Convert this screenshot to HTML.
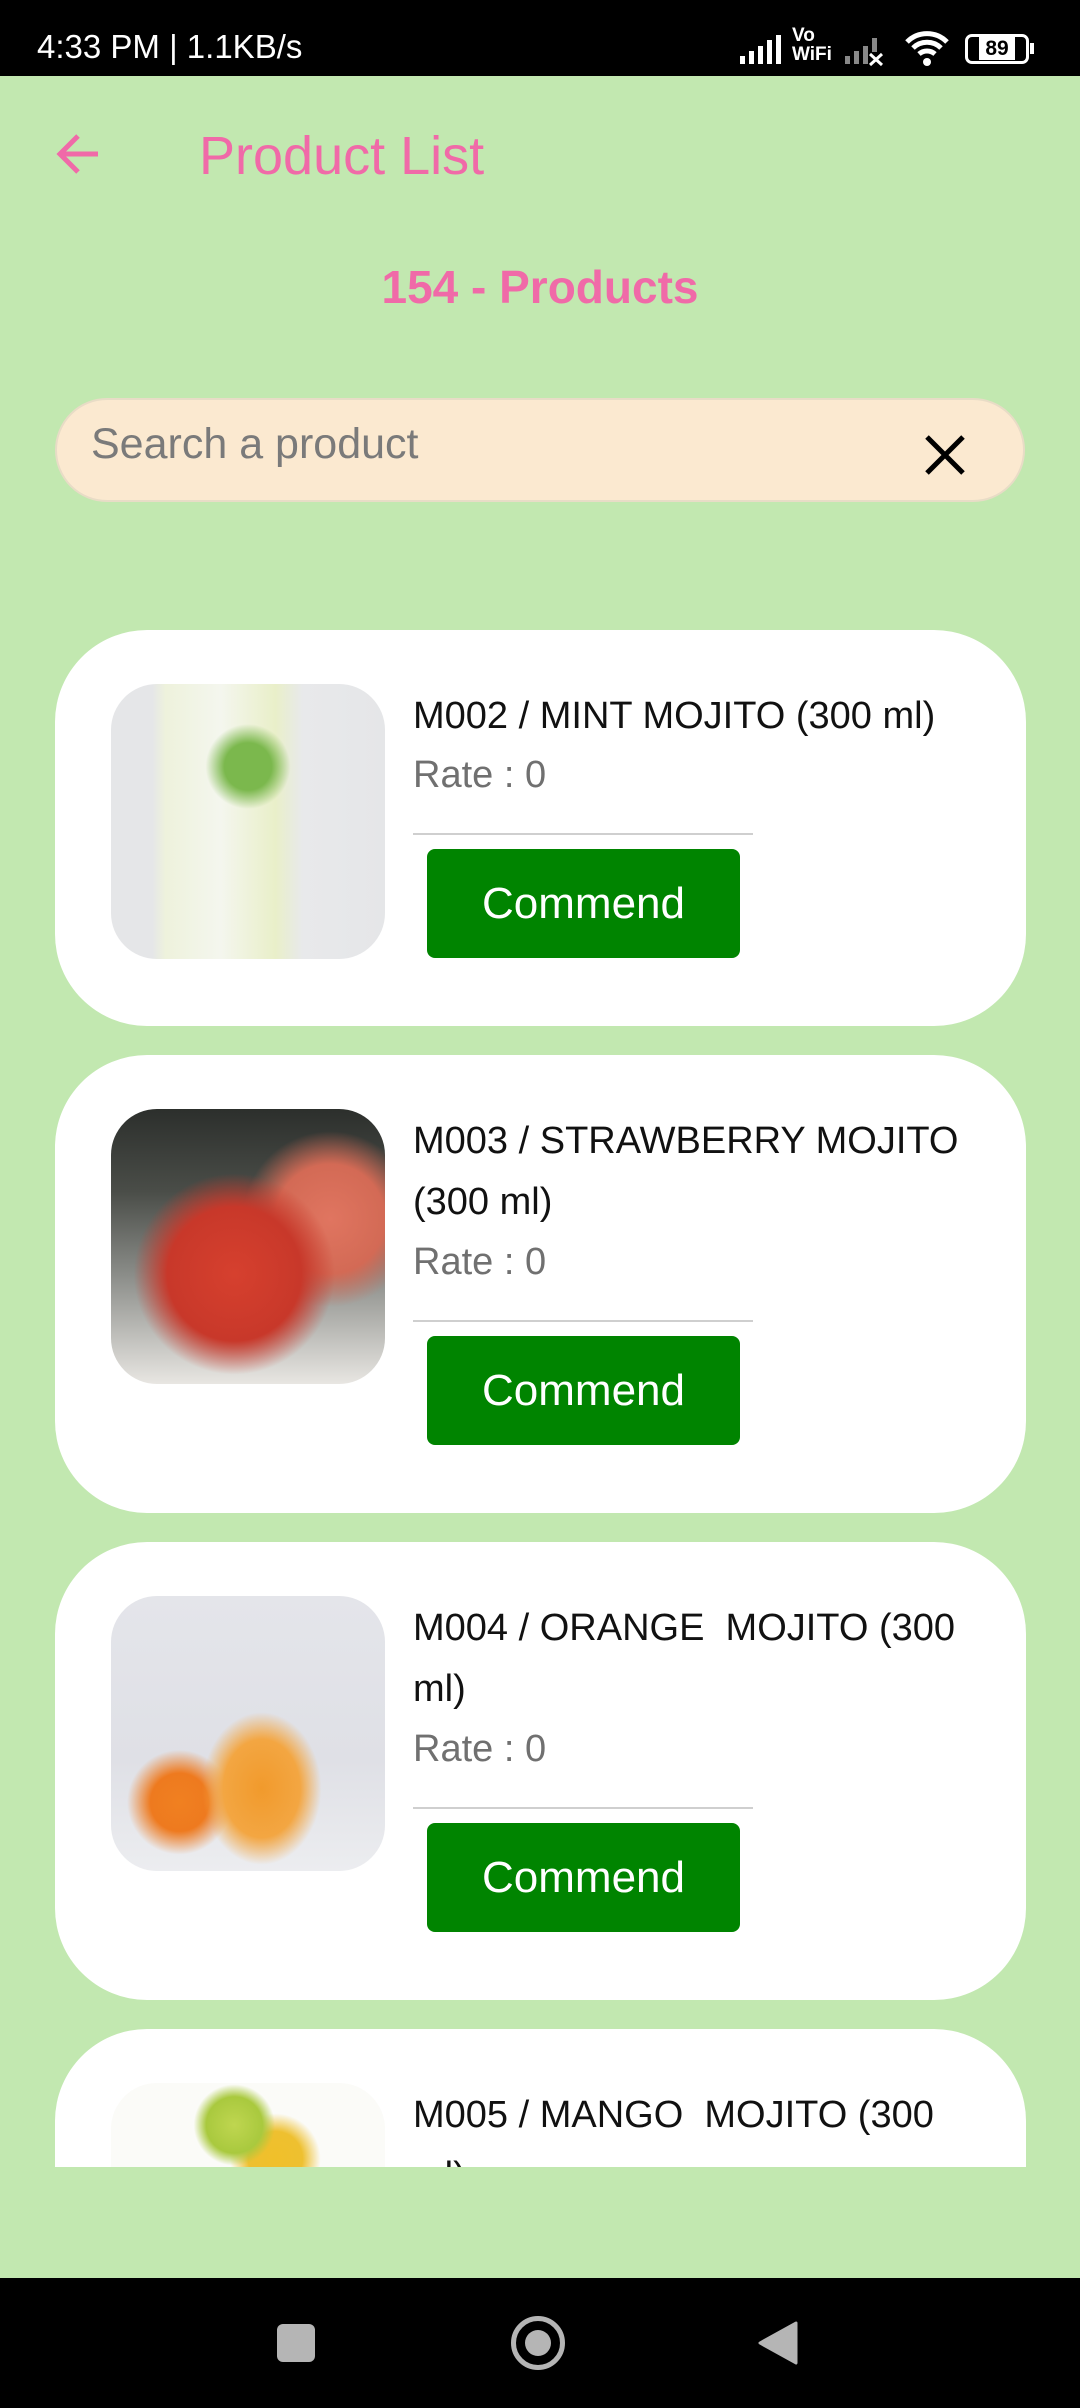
<!DOCTYPE html>
<html><head><meta charset="utf-8"><style>
*{margin:0;padding:0;box-sizing:border-box}
body{width:1080px;height:2408px;background:#c2e8b0;font-family:"Liberation Sans",sans-serif;position:relative;overflow:hidden}
.sb{position:absolute;left:0;top:0;width:1080px;height:76px;background:#000;color:#fff}
.nav{position:absolute;left:0;top:2278px;width:1080px;height:130px;background:#000}
.abs{position:absolute}
.card{position:absolute;left:55px;width:971px;height:458px;background:#fff;border-radius:92px;overflow:hidden}
.img{position:absolute;left:56px;top:54px;width:274px;height:275px;border-radius:46px;overflow:hidden}
.t{position:absolute;left:358px;font-size:38px;color:#111;line-height:61px;width:555px}
.r{position:absolute;left:358px;font-size:38px;color:#707070}
.ln{position:absolute;left:358px;width:340px;height:2px;background:#cfcfcf}
.btn{position:absolute;left:372px;width:313px;height:109px;background:#008400;border-radius:8px;color:#fff;font-size:44px;text-align:center;line-height:109px}
</style></head><body>
<div class="sb">
<div class="abs" style="left:37px;top:28px;font-size:33px">4:33 PM | 1.1KB/s</div>
<div class="abs" style="left:738px;top:34px">
<svg width="46" height="32"><rect x="2" y="22" width="5" height="8" fill="#fff"/><rect x="11" y="17" width="5" height="13" fill="#fff"/><rect x="20" y="12" width="5" height="18" fill="#fff"/><rect x="29" y="6" width="5" height="24" fill="#fff"/><rect x="38" y="1" width="5" height="29" fill="#fff"/></svg></div>
<div class="abs" style="left:792px;top:26px;font-size:19px;line-height:19px;font-weight:bold">Vo<br>WiFi</div>
<div class="abs" style="left:843px;top:34px"><svg width="46" height="32"><rect x="2" y="22" width="5" height="8" fill="#888"/><rect x="11" y="17" width="5" height="13" fill="#888"/><rect x="20" y="12" width="5" height="18" fill="#888"/><rect x="29" y="4" width="5" height="14" fill="#888"/><path d="M27 20l12 11M39 20l-12 11" stroke="#fff" stroke-width="3"/></svg></div>
<div class="abs" style="left:904px;top:28px"><svg width="46" height="40" viewBox="0 0 46 40"><path d="M3 14a28 28 0 0 1 40 0M9 20a20 20 0 0 1 28 0M15 26a12 12 0 0 1 16 0" stroke="#fff" stroke-width="5" fill="none"/><circle cx="23" cy="34" r="4" fill="#fff"/></svg></div>
<div class="abs" style="left:965px;top:34px;width:64px;height:30px;border:3px solid #fff;border-radius:7px;font-size:21px;text-align:center;line-height:24px;font-weight:bold"><span style="background:#fff;color:#000;padding:0 6px">89</span></div>
<div class="abs" style="left:1030px;top:43px;width:4px;height:11px;background:#fff"></div>
</div>
<svg class="abs" style="left:54px;top:132px" width="48" height="44" viewBox="0 0 48 44"><path d="M44 22H6M24 4L6 22l18 18" stroke="#f06aa8" stroke-width="5" fill="none"/></svg>
<div class="abs" style="left:199px;top:125px;font-size:54px;color:#f06aa8">Product List</div>
<div class="abs" style="left:0;width:1080px;text-align:center;top:260px;font-size:46px;font-weight:bold;color:#f06aa8">154 - Products</div>
<div class="abs" style="left:55px;top:398px;width:970px;height:104px;background:#fbe9d0;border-radius:52px;border:2px solid #e8dcc6"></div>
<div class="abs" style="left:91px;top:420px;font-size:43px;color:#7a7a7a">Search a product</div>
<svg class="abs" style="left:924px;top:434px" width="42" height="42"><path d="M3 3l36 36M39 3L3 39" stroke="#000" stroke-width="5"/></svg>

<div class="card" style="top:630px;height:396px">
<div class="img" style="background:radial-gradient(circle at 50% 30%,#7bb84d 0,#7bb84d 10%,transparent 18%),linear-gradient(90deg,#e5e6e8 0,#e5e6e8 15%,#eef2dc 20%,#f4f6ee 40%,#e9efc9 60%,#e8e9eb 70%,#e5e6e8 100%)"></div>
<div class="t" style="top:56px">M002 / MINT MOJITO (300 ml)</div>
<div class="r" style="top:124px">Rate : 0</div>
<div class="ln" style="top:203px"></div>
<div class="btn" style="top:219px">Commend</div>
</div>

<div class="card" style="top:1055px">
<div class="img" style="background:radial-gradient(circle at 45% 60%,#d6402e 0,#c8382a 30%,transparent 45%),radial-gradient(circle at 80% 40%,#e07560 0,#d36a55 20%,transparent 32%),linear-gradient(180deg,#2c2f2c 0,#4a4d48 30%,#8a8c88 60%,#e8e6e2 100%)"></div>
<div class="t" style="top:56px">M003 / STRAWBERRY MOJITO (300 ml)</div>
<div class="r" style="top:186px">Rate : 0</div>
<div class="ln" style="top:265px"></div>
<div class="btn" style="top:281px">Commend</div>
</div>

<div class="card" style="top:1542px">
<div class="img" style="background:radial-gradient(ellipse at 55% 70%,#f19a2c 0,#f3a642 18%,transparent 28%),radial-gradient(circle at 25% 75%,#f08020 0,#ee7a1f 10%,transparent 18%),linear-gradient(180deg,#e4e5ea 0,#dfe0e6 60%,#ecedf0 100%)"></div>
<div class="t" style="top:56px">M004 / ORANGE &nbsp;MOJITO (300 ml)</div>
<div class="r" style="top:186px">Rate : 0</div>
<div class="ln" style="top:265px"></div>
<div class="btn" style="top:281px">Commend</div>
</div>

<div class="card" style="top:2029px;height:138px;border-radius:92px 92px 0 0">
<div class="img" style="top:54px;height:84px;border-radius:46px 46px 0 0;background:radial-gradient(circle at 45% 50%,#bfd650 0,#a9c93e 18%,transparent 26%),radial-gradient(circle at 60% 90%,#f0c02a 0,#eec030 15%,transparent 25%),#fbfbf8"></div>
<div class="t" style="top:56px">M005 / MANGO &nbsp;MOJITO (300 ml)</div>
</div>

<div class="nav">
<div class="abs" style="left:277px;top:46px;width:38px;height:38px;background:#b5b5b5;border-radius:6px"></div>
<div class="abs" style="left:511px;top:38px;width:54px;height:54px;border:5px solid #b5b5b5;border-radius:50%"></div>
<div class="abs" style="left:525px;top:52px;width:26px;height:26px;background:#b5b5b5;border-radius:50%"></div>
<svg class="abs" style="left:758px;top:43px" width="40" height="44"><path d="M38 2L2 22l36 20z" fill="#b5b5b5" stroke="#b5b5b5" stroke-width="3" stroke-linejoin="round"/></svg>
</div>
</body></html>
